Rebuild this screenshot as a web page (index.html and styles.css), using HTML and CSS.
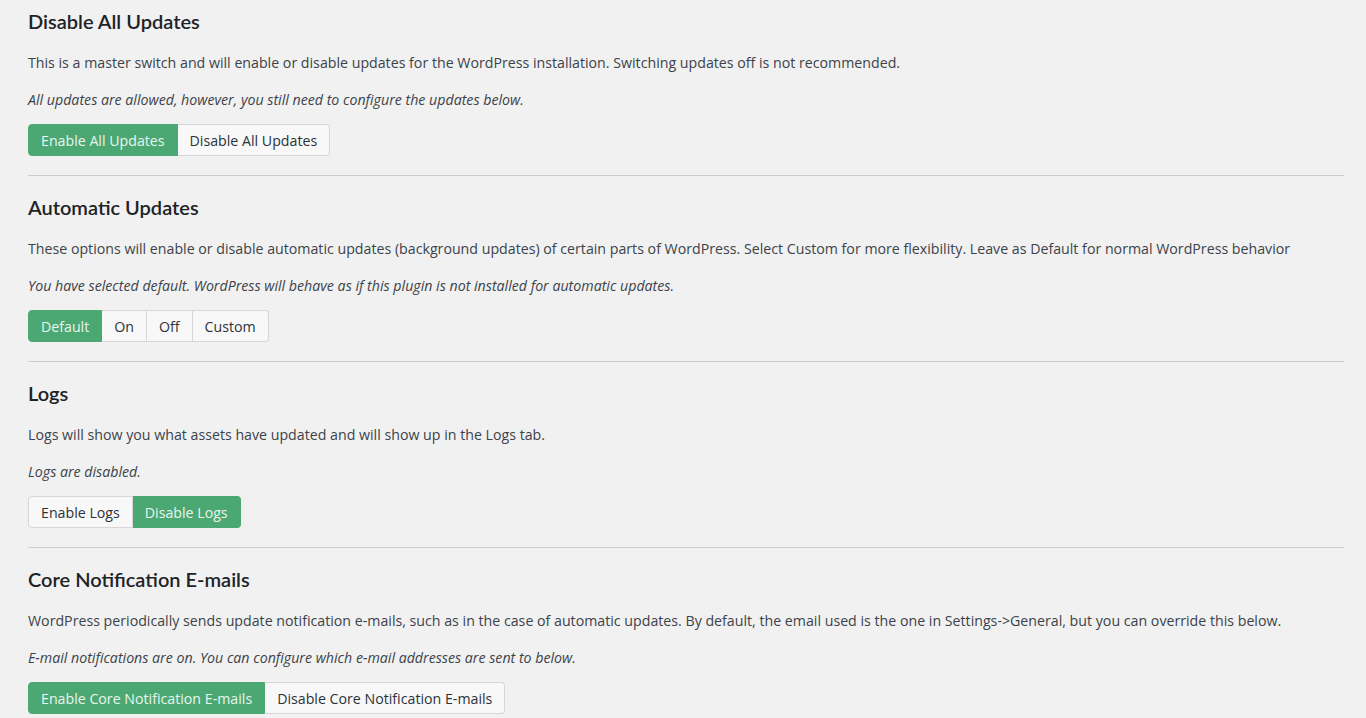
FILE: index.html
```html
<!DOCTYPE html>
<html lang="en">
<head>
  <meta charset="UTF-8">
  <title>Updates Settings</title>
  <link rel="stylesheet" href="styles.css">
</head>
<body>
  <div class="wrap">

    <!-- Master switch -->
    <div class="section">
      <h2>Disable All Updates</h2>
      <p>This is a master switch and will enable or disable updates for the WordPress installation. Switching updates off is not recommended.</p>
      <p class="status">All updates are allowed, however, you still need to configure the updates below.</p>
      <div class="btn-group">
        <button class="active">Enable All Updates</button>
        <button>Disable All Updates</button>
      </div>
    </div>

    <!-- Automatic updates -->
    <div class="section">
      <h2>Automatic Updates</h2>
      <p>These options will enable or disable automatic updates (background updates) of certain parts of WordPress. Select Custom for more flexibility. Leave as Default for normal WordPress behavior</p>
      <p class="status">You have selected default. WordPress will behave as if this plugin is not installed for automatic updates.</p>
      <div class="btn-group">
        <button class="active">Default</button>
        <button>On</button>
        <button>Off</button>
        <button>Custom</button>
      </div>
    </div>

    <!-- Logs -->
    <div class="section">
      <h2>Logs</h2>
      <p>Logs will show you what assets have updated and will show up in the Logs tab.</p>
      <p class="status">Logs are disabled.</p>
      <div class="btn-group">
        <button>Enable Logs</button>
        <button class="active">Disable Logs</button>
      </div>
    </div>

    <!-- Core emails -->
    <div class="section">
      <h2>Core Notification E-mails</h2>
      <p>WordPress periodically sends update notification e-mails, such as in the case of automatic updates. By default, the email used is the one in Settings-&gt;General, but you can override this below.</p>
      <p class="status">E-mail notifications are on. You can configure which e-mail addresses are sent to below.</p>
      <div class="btn-group">
        <button class="active">Enable Core Notification E-mails</button>
        <button>Disable Core Notification E-mails</button>
      </div>
    </div>

  </div>
</body>
</html>
```

FILE: styles.css
```css
body {
  margin: 0;
  background-color: #f1f1f1;
  font-family: "Open Sans", "Noto Sans", sans-serif;
  color: #3c434a;
  font-size: 14.2px;
}

.wrap {
  padding: 0 22px 0 28px;
}

.section {
  border-bottom: 1px solid #cccccc;
  padding: 8px 0 19px;
}

.section + .section {
  padding-top: 18px;
}

.section:last-child {
  border-bottom: none;
}

h2 {
  margin: 0;
  font-family: Lato, "Open Sans", sans-serif;
  font-size: 20px;
  font-weight: 600;
  color: #1d2327;
  line-height: 26px;
}

p {
  margin: 17px 0 0;
  line-height: 24px;
}

p.status {
  font-style: italic;
  margin-top: 13px;
}

.btn-group {
  display: flex;
  margin-top: 12px;
}

.btn-group button {
  font-family: inherit;
  font-size: 14.2px;
  color: #2c3338;
  background-color: #f8f8f8;
  border: 1px solid #d6d6d6;
  border-left: none;
  height: 32px;
  padding: 0 12px;
  cursor: pointer;
}

.btn-group button:first-child {
  border-left: 1px solid #d6d6d6;
  border-radius: 4px 0 0 4px;
}

.btn-group button:last-child {
  border-radius: 0 4px 4px 0;
}

.btn-group button.active {
  background-color: #4ba873;
  border-color: #4ba873;
  color: #eaf5ee;
}
```
